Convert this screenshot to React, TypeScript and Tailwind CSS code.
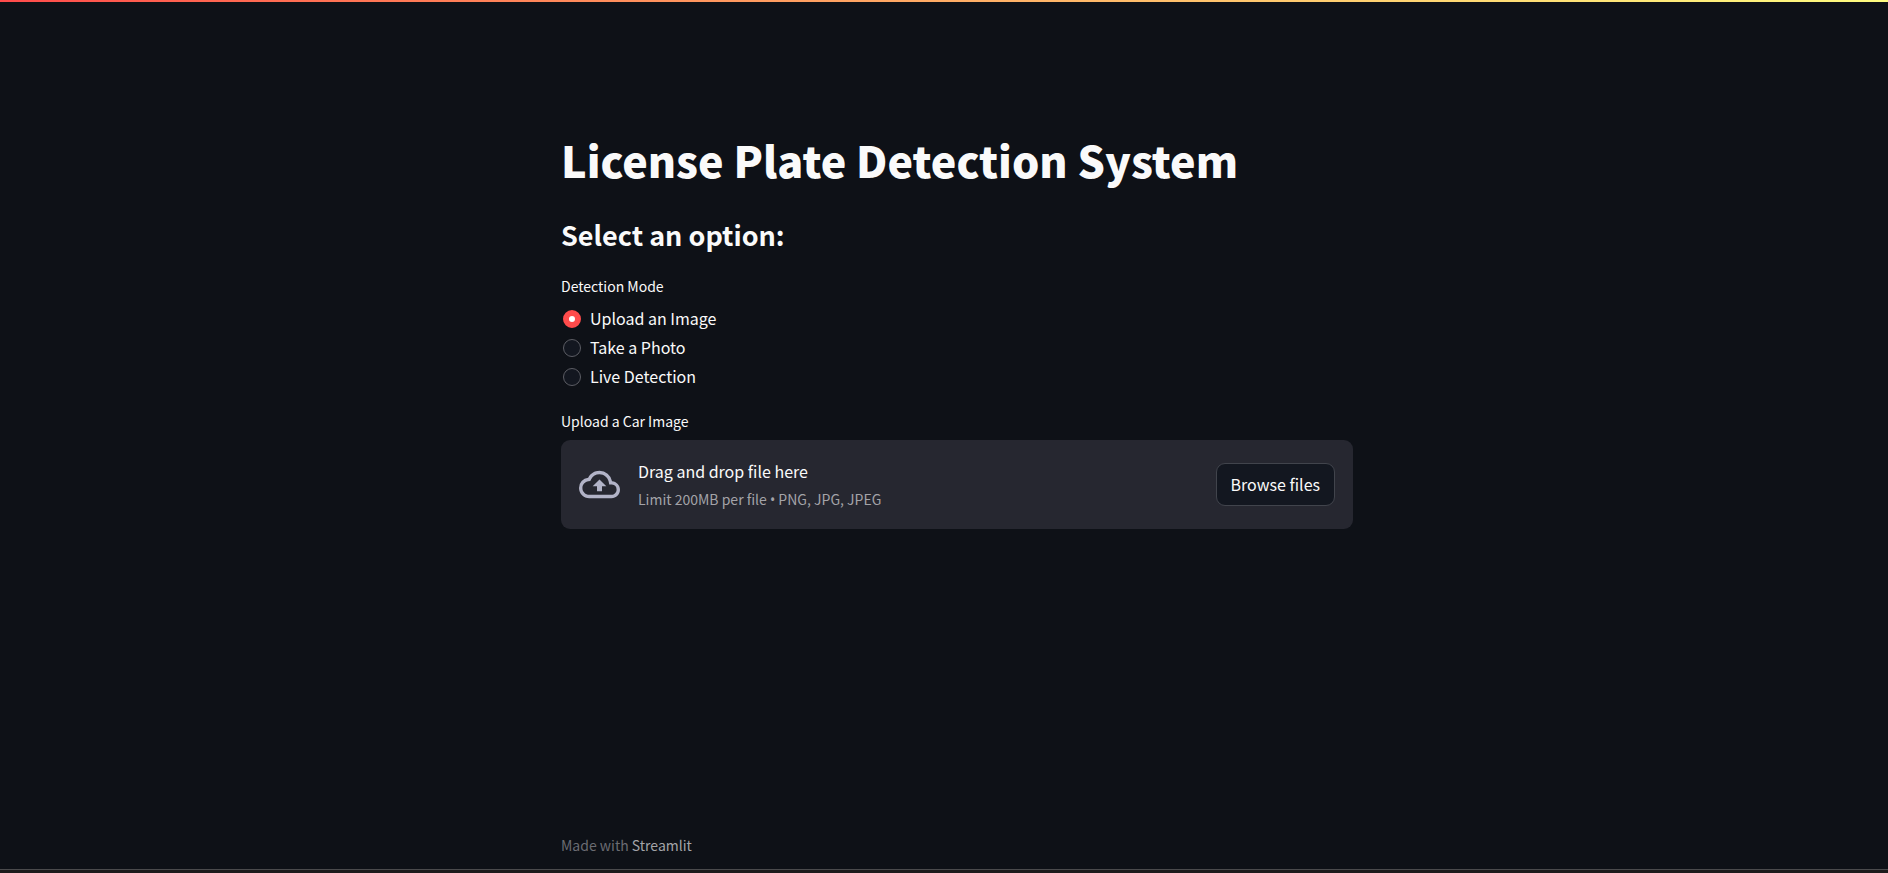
import { useRef, useState } from "react";

const modes = ["Upload an Image", "Take a Photo", "Live Detection"];

function CloudUpload() {
  return (
    <svg viewBox="0 0 24 24" className="size-[41px] shrink-0" fill="#b2b3c7" aria-hidden="true">
      <path d="M19.35 10.04A7.49 7.49 0 0 0 12 4C9.11 4 6.6 5.64 5.35 8.04A5.994 5.994 0 0 0 0 14c0 3.31 2.69 6 6 6h13c2.76 0 5-2.24 5-5 0-2.64-2.05-4.78-4.65-4.96zM19 18H6c-2.21 0-4-1.79-4-4 0-2.05 1.53-3.76 3.56-3.97l1.07-.11.5-.95A5.469 5.469 0 0 1 12 6c2.62 0 4.88 1.86 5.39 4.43l.3 1.5 1.53.11A2.98 2.98 0 0 1 22 15c0 1.65-1.35 3-3 3zM8 13h2.55v3h2.9v-3H16l-4-4z" />
    </svg>
  );
}

export default function App() {
  const [mode, setMode] = useState(modes[0]);
  const fileInput = useRef<HTMLInputElement>(null);

  return (
    <div className="flex min-h-screen flex-col bg-[#0e1117] font-['Noto_Sans_CJK_SC','Noto_Sans',sans-serif] text-base text-[#fafafa]">
      <div className="h-0.5 bg-linear-to-r from-[#ff4b4b] to-[#fffd80]" />
      <div className="flex grow flex-col pl-[26px]">
        <main className="mx-auto flex w-full max-w-[792px] grow flex-col pt-[127px]">
          <h1 className="text-[43px] leading-[60px] font-black">License Plate Detection System</h1>
          <h2 className="mt-[26px] text-[27px] leading-[40px] font-bold">Select an option:</h2>
          <fieldset className="mt-[19px]">
            <legend className="mb-[7px] text-sm leading-6">Detection Mode</legend>
            <div className="flex flex-col gap-[3px]">
              {modes.map((name) => (
                <label key={name} className="flex cursor-pointer items-start gap-[9px] pl-0.5 leading-[26px]">
                  <input
                    type="radio"
                    name="mode"
                    checked={mode === name}
                    onChange={() => setMode(name)}
                    className="mt-[5px] size-[18px] appearance-none rounded-full border border-[#5c5d64] bg-[#131720] checked:border-[6px] checked:border-[#ff4b4b] checked:bg-white"
                  />
                  {name}
                </label>
              ))}
            </div>
          </fieldset>
          <label htmlFor="car-image" className="mt-[20px] text-sm leading-6">
            Upload a Car Image
          </label>
          <section className="mt-[7px] flex items-center rounded-[9px] bg-[#262730] px-[18px] py-4">
            <CloudUpload />
            <div className="ml-[18px] grow">
              <p className="leading-[30px]">Drag and drop file here</p>
              <p className="text-sm leading-[27px] text-[#a3a3a8]">
                Limit 200MB per file <span className="font-['Noto_Sans']">•</span> PNG, JPG, JPEG
              </p>
            </div>
            <input ref={fileInput} id="car-image" type="file" accept=".png,.jpg,.jpeg" className="hidden" />
            <button
              type="button"
              onClick={() => fileInput.current?.click()}
              className="h-[43px] cursor-pointer rounded-[9px] border border-[#41444c] bg-[#131720] px-[14px] pb-0.5"
            >
              Browse files
            </button>
          </section>
        </main>
        <footer className="mx-auto w-full max-w-[792px] pb-3 text-sm leading-6 text-[#6b6c72]">
          Made with{" "}
          <a href="https://streamlit.io" className="text-[#a3a4a8]">
            Streamlit
          </a>
        </footer>
      </div>
      <div className="h-1 border-t border-[#4a4a4c] bg-[#1d1b1c]" />
    </div>
  );
}
